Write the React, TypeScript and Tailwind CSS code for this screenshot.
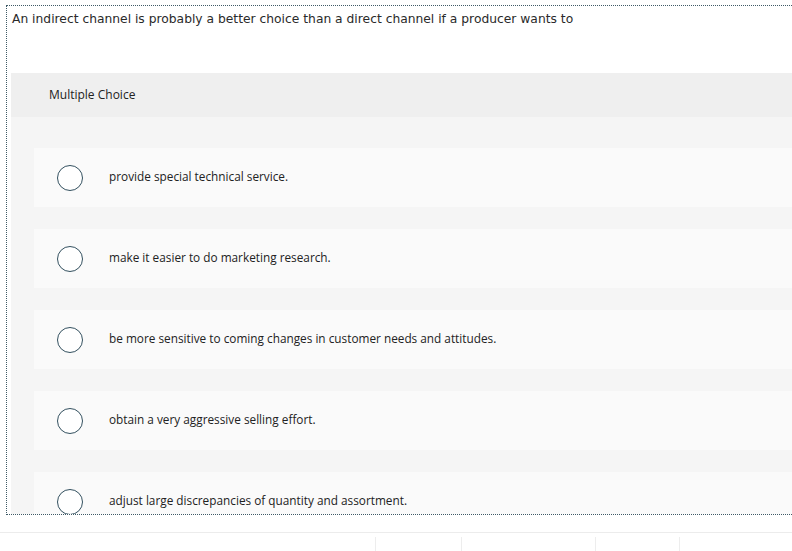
import React from "react";

const choices = [
  "provide special technical service.",
  "make it easier to do marketing research.",
  "be more sensitive to coming changes in customer needs and attitudes.",
  "obtain a very aggressive selling effort.",
  "adjust large discrepancies of quantity and assortment.",
];

export default function App() {
  return (
    <div className="w-[792px] h-[551px] overflow-hidden bg-white">
      <div className="ml-[6px] mt-[5px] h-[510px] w-[800px] overflow-hidden border border-dotted border-[#3f5a66]">
        <div className="pl-[5px] pt-[4px] h-[67px] text-[12.3px] text-[#2a2a2a] font-['DejaVu_Sans',sans-serif]">
          An indirect channel is probably a better choice than a direct channel if a producer wants to
        </div>
        <div className="ml-[4px] bg-[#f5f5f5]">
          <div className="h-[44px] bg-[#efefef] pl-[38px] flex items-center text-[12px] text-[#222] font-['Open_Sans',sans-serif]">
            Multiple Choice
          </div>
          <div className="pt-[31px] pl-[23px] flex flex-col gap-[22px]">
            {choices.map((c) => (
              <div key={c} className="h-[59px] bg-[#fafafa] flex items-center">
                <div className="ml-[23px] w-[26px] h-[26px] rounded-full border-[1.5px] border-[#33505f] bg-white shrink-0" />
                <div className="ml-[26px] -mt-[2px] text-[11.8px] text-[#222] font-['Open_Sans',sans-serif]">{c}</div>
              </div>
            ))}
          </div>
        </div>
      </div>
      <div className="mt-[17px] border-t border-[#ececec] h-[20px] flex">
        <div className="w-[375px]" />
        <div className="mt-[4px] w-[86px] border-l border-[#ededed]" />
        <div className="mt-[4px] w-[134px] border-l border-[#ededed]" />
        <div className="mt-[4px] w-[84px] border-l border-[#ededed]" />
        <div className="mt-[4px] flex-1 border-l border-[#ededed]" />
      </div>
    </div>
  );
}
